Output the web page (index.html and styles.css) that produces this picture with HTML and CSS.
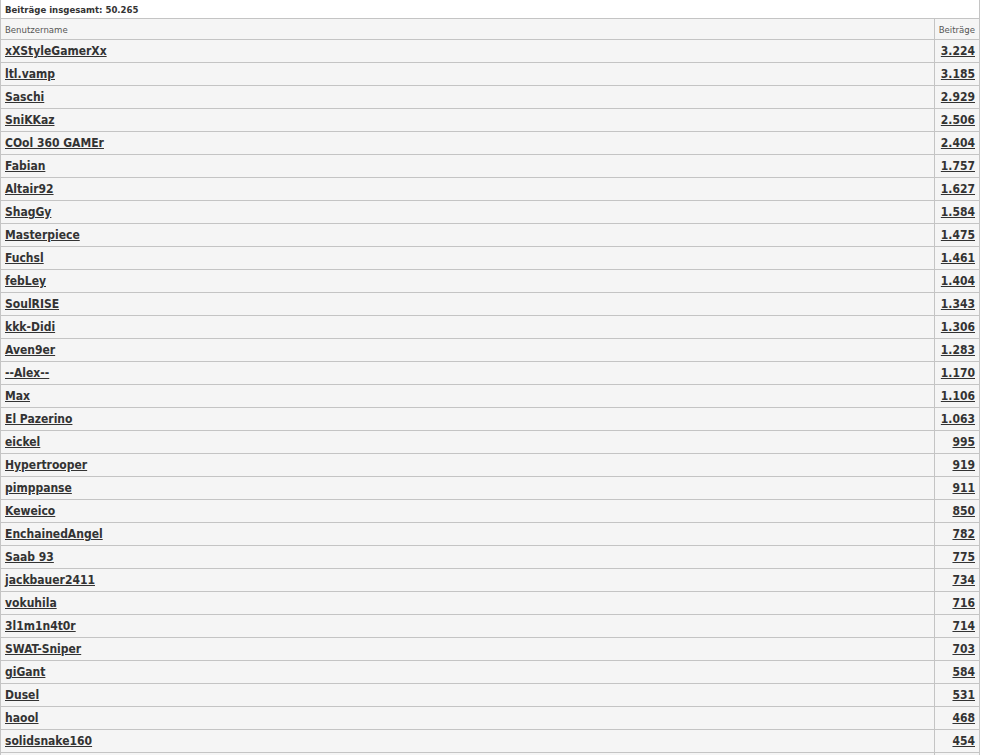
FILE: index.html
```html
<!DOCTYPE html>
<html lang="de">
<head>
  <meta charset="UTF-8" />
  <title>Beiträge</title>
  <link rel="stylesheet" href="styles.css">
</head>
<body>
  <table class="stats">
    <colgroup>
      <col>
      <col class="num-col">
    </colgroup>
    <tr class="total-row">
      <td colspan="2">Beiträge insgesamt: 50.265</td>
    </tr>
    <tr class="head-row">
      <td>Benutzername</td>
      <td class="num">Beiträge</td>
    </tr>
    <tr><td><a href="#">xXStyleGamerXx</a></td><td class="num"><a href="#">3.224</a></td></tr>
    <tr><td><a href="#">ltl.vamp</a></td><td class="num"><a href="#">3.185</a></td></tr>
    <tr><td><a href="#">Saschi</a></td><td class="num"><a href="#">2.929</a></td></tr>
    <tr><td><a href="#">SniKKaz</a></td><td class="num"><a href="#">2.506</a></td></tr>
    <tr><td><a href="#">COol 360 GAMEr</a></td><td class="num"><a href="#">2.404</a></td></tr>
    <tr><td><a href="#">Fabian</a></td><td class="num"><a href="#">1.757</a></td></tr>
    <tr><td><a href="#">Altair92</a></td><td class="num"><a href="#">1.627</a></td></tr>
    <tr><td><a href="#">ShagGy</a></td><td class="num"><a href="#">1.584</a></td></tr>
    <tr><td><a href="#">Masterpiece</a></td><td class="num"><a href="#">1.475</a></td></tr>
    <tr><td><a href="#">Fuchsl</a></td><td class="num"><a href="#">1.461</a></td></tr>
    <tr><td><a href="#">febLey</a></td><td class="num"><a href="#">1.404</a></td></tr>
    <tr><td><a href="#">SoulRISE</a></td><td class="num"><a href="#">1.343</a></td></tr>
    <tr><td><a href="#">kkk-Didi</a></td><td class="num"><a href="#">1.306</a></td></tr>
    <tr><td><a href="#">Aven9er</a></td><td class="num"><a href="#">1.283</a></td></tr>
    <tr><td><a href="#">--Alex--</a></td><td class="num"><a href="#">1.170</a></td></tr>
    <tr><td><a href="#">Max</a></td><td class="num"><a href="#">1.106</a></td></tr>
    <tr><td><a href="#">El Pazerino</a></td><td class="num"><a href="#">1.063</a></td></tr>
    <tr><td><a href="#">eickel</a></td><td class="num"><a href="#">995</a></td></tr>
    <tr><td><a href="#">Hypertrooper</a></td><td class="num"><a href="#">919</a></td></tr>
    <tr><td><a href="#">pimppanse</a></td><td class="num"><a href="#">911</a></td></tr>
    <tr><td><a href="#">Keweico</a></td><td class="num"><a href="#">850</a></td></tr>
    <tr><td><a href="#">EnchainedAngel</a></td><td class="num"><a href="#">782</a></td></tr>
    <tr><td><a href="#">Saab 93</a></td><td class="num"><a href="#">775</a></td></tr>
    <tr><td><a href="#">jackbauer2411</a></td><td class="num"><a href="#">734</a></td></tr>
    <tr><td><a href="#">vokuhila</a></td><td class="num"><a href="#">716</a></td></tr>
    <tr><td><a href="#">3l1m1n4t0r</a></td><td class="num"><a href="#">714</a></td></tr>
    <tr><td><a href="#">SWAT-Sniper</a></td><td class="num"><a href="#">703</a></td></tr>
    <tr><td><a href="#">giGant</a></td><td class="num"><a href="#">584</a></td></tr>
    <tr><td><a href="#">Dusel</a></td><td class="num"><a href="#">531</a></td></tr>
    <tr><td><a href="#">haool</a></td><td class="num"><a href="#">468</a></td></tr>
    <tr><td><a href="#">solidsnake160</a></td><td class="num"><a href="#">454</a></td></tr>
    <tr><td></td><td class="num"></td></tr>
  </table>
</body>
</html>
```

FILE: styles.css
```css
body { margin: 0; background: #fff; font-family: "DejaVu Sans Condensed", "DejaVu Sans", sans-serif; color: #333; }
.stats {
  width: 980px;
  table-layout: fixed;
  border-collapse: collapse;
  border-left: 1px solid #c4c4c4;
}
.num-col { width: 45px; }
.stats td {
  border: 1px solid #c4c4c4;
  border-left: none;
  padding: 0 4px;
  height: 22px;
  background: #f5f5f5;
  font-size: 12px;
  font-weight: bold;
  vertical-align: middle;
  white-space: nowrap;
}
.stats td.num { text-align: right; border-left: 1px solid #c4c4c4; padding: 0 4px 0 2px; }
.stats tr:first-child td { border-top: none; }
.total-row td {
  background: #fff;
  height: 18px;
  font-size: 9.5px;
}
.head-row td {
  height: 20px;
  font-size: 9.5px;
  font-weight: normal;
  color: #555;
}
.stats a { color: #333; text-decoration: underline; }
```
